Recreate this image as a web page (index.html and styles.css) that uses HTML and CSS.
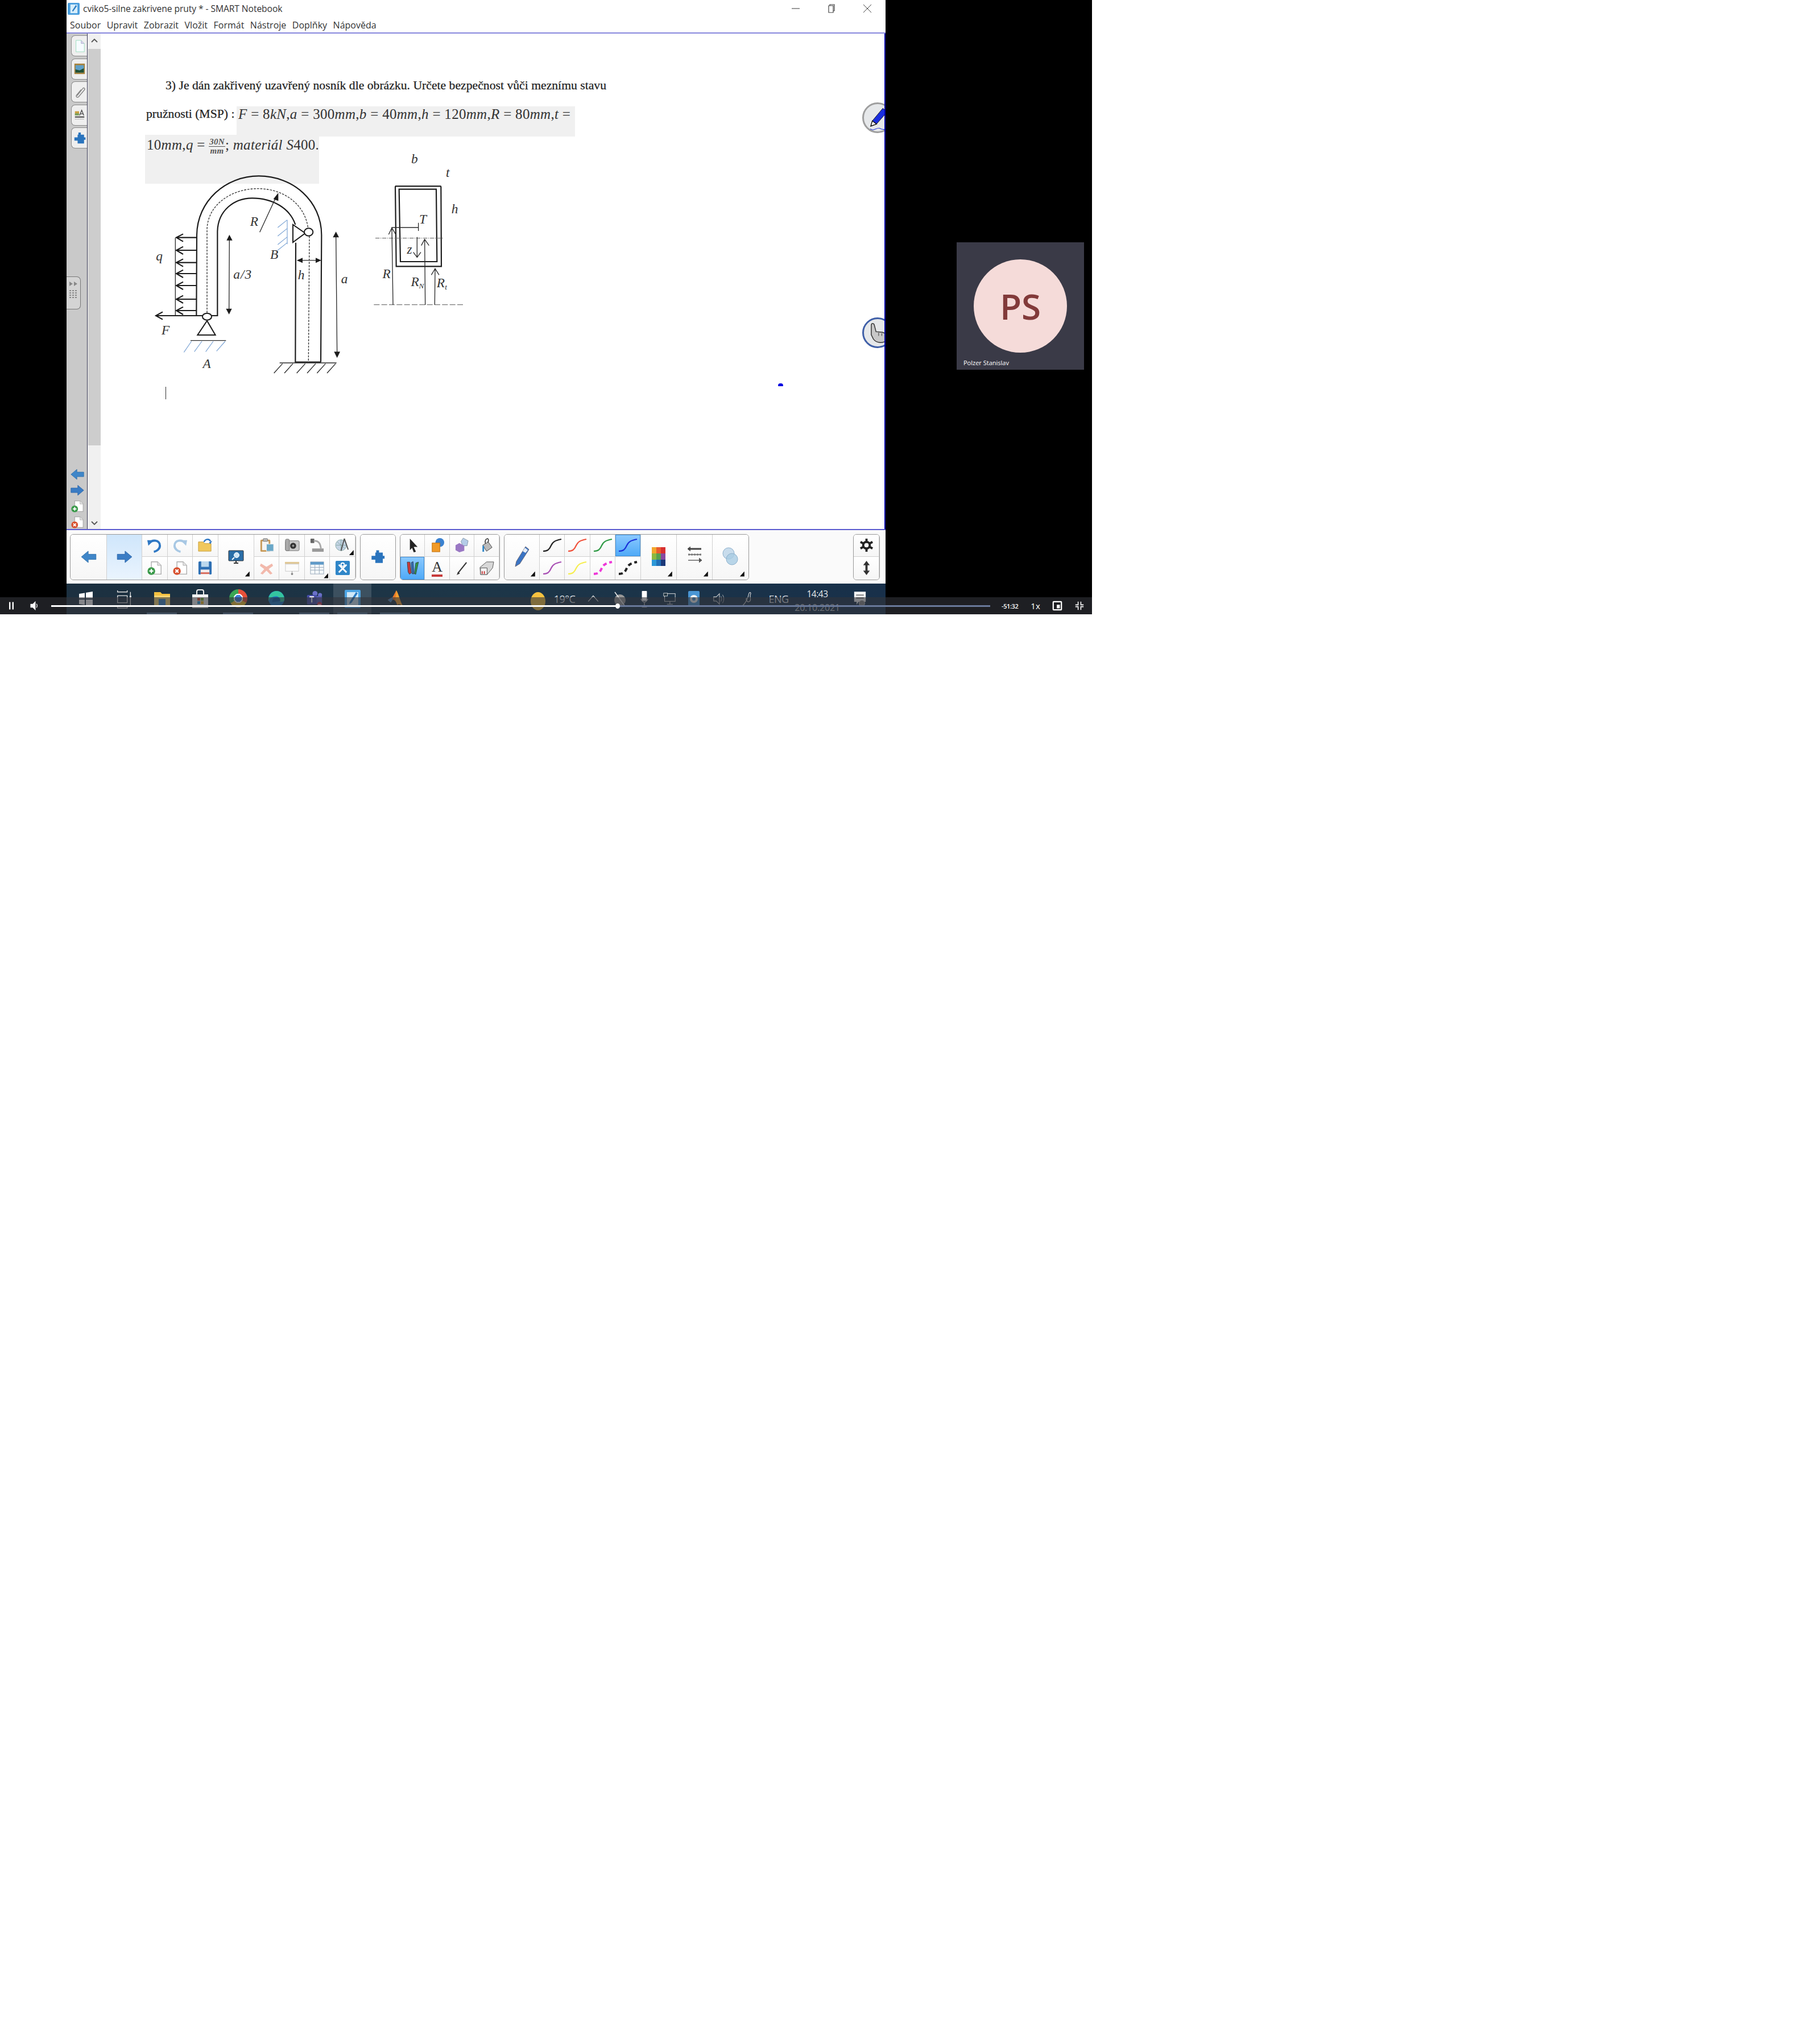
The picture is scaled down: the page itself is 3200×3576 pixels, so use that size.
FILE: index.html
```html
<!DOCTYPE html>
<html lang="cs">
<head>
    <meta charset="UTF-8">
    <title>cviko5-silne zakrivene pruty - SMART Notebook</title>
    <link rel="stylesheet" href="styles.css">
</head>
<body>
    <svg class="defs" width="0" height="0">
        <symbol id="squiggle" viewBox="0 0 36 30"><path d="M2 25C10 25 13 22 16 15C19 8 24 6 34 4" fill="none" stroke="currentColor"/></symbol>
        <symbol id="arrow-l" viewBox="0 0 30 24"><path d="M1 12L14 1V7H29V17H14V23Z" fill="#3f86c8" stroke="#2f6ea8"/></symbol>
        <symbol id="arrow-r" viewBox="0 0 30 24"><path d="M29 12L16 1V7H1V17H16V23Z" fill="#3a7cc4" stroke="#2b64a8"/></symbol>
        <symbol id="page-add" viewBox="0 0 30 28"><path d="M9 2H21L28 9V26H9Z" fill="#fff" stroke="#aaa" stroke-width="1.5"/><path d="M21 2V9H28" fill="#e4e4e4" stroke="#aaa"/><circle cx="9" cy="20" r="7.5" fill="#3a9a4a"/><path d="M5 20H13M9 16V24" stroke="#fff" stroke-width="2.5"/></symbol>
        <symbol id="page-del" viewBox="0 0 30 28"><path d="M9 2H21L28 9V26H9Z" fill="#fff" stroke="#aaa" stroke-width="1.5"/><path d="M21 2V9H28" fill="#e4e4e4" stroke="#aaa"/><circle cx="9" cy="20" r="7.5" fill="#d8502e"/><path d="M6 17L12 23M12 17L6 23" stroke="#fff" stroke-width="2.5"/></symbol>
        <symbol id="puzzle" viewBox="0 0 30 34"><path d="M12 8V3H18V8H26V15H30V21H26V30H10V23H2V15H10V8Z" fill="#2a74bd"/></symbol>
    </svg>

    <div class="video">
        <div class="window">
            <div class="titlebar">
                <svg class="app-icon" viewBox="0 0 22 22"><rect width="22" height="22" rx="2" fill="#4a9ede"/><rect x="5" y="3" width="13" height="16" fill="#d8eefa"/><path d="M8 15L15 4L17 6L10 16Z" fill="#2f7fc4"/></svg>
                <span class="title-text">cviko5-silne zakrivene pruty * - SMART Notebook</span>
                <div class="win-buttons">
                    <svg viewBox="0 0 16 16"><path d="M1 8H15" stroke="#555" stroke-width="1.2"/></svg>
                    <svg viewBox="0 0 16 16"><path d="M5 3V1H13V12H11M3 3H11V15H3Z" fill="none" stroke="#444" stroke-width="1.2"/></svg>
                    <svg viewBox="0 0 16 16"><path d="M1 1L15 15M15 1L1 15" stroke="#444" stroke-width="1"/></svg>
                </div>
            </div>
            <div class="menubar">
                <span>Soubor</span><span>Upravit</span><span>Zobrazit</span><span>Vložit</span><span>Formát</span><span>Nástroje</span><span>Doplňky</span><span>Nápověda</span>
            </div>

            <div class="main">
                <div class="sidebar">
                    <div class="side-tab"><svg viewBox="0 0 24 26"><path d="M5 2H15L21 8V24H5Z" fill="#f6fbff" stroke="#9db" stroke-width="1"/><path d="M15 2V8H21" fill="#dce" stroke="#abc"/></svg></div>
                    <div class="side-tab"><svg viewBox="0 0 24 26"><rect x="2" y="3" width="20" height="20" fill="#a8813a"/><rect x="4" y="6" width="16" height="14" fill="#5fa0c8"/><path d="M4 20V14L12 16L20 12V20Z" fill="#1f4f33"/></svg></div>
                    <div class="side-tab"><svg viewBox="0 0 24 26"><path d="M7 20L18 6C20 3 23 6 21 9L10 22C8 24 4 22 6 19L15 8" fill="none" stroke="#888" stroke-width="1.6"/></svg></div>
                    <div class="side-tab"><svg viewBox="0 0 24 26"><rect x="3" y="6" width="8" height="8" fill="#c9a040"/><rect x="3" y="10" width="8" height="4" fill="#7aa060"/><path d="M12 14L16 4L20 14M14 11H18" fill="none" stroke="#444" stroke-width="1.4"/><path d="M3 17H21" stroke="#333" stroke-width="2"/><path d="M3 21H21" stroke="#888" stroke-dasharray="2 1"/></svg></div>
                    <div class="side-tab"><svg viewBox="0 0 30 34"><use href="#puzzle"/></svg></div>
                    <div class="side-handle">
                        <svg viewBox="0 0 24 54"><path d="M5 8L11 12L5 16ZM13 8L19 12L13 16Z" fill="#888"/><path d="M5 24H19M5 28H19M5 32H19M5 36H19" stroke="#888" stroke-width="2" stroke-dasharray="3 2"/></svg>
                    </div>
                    <div class="side-nav">
                        <svg viewBox="0 0 30 24"><use href="#arrow-l"/></svg>
                        <svg viewBox="0 0 30 24"><use href="#arrow-r"/></svg>
                        <svg viewBox="0 0 30 28"><use href="#page-add"/></svg>
                        <svg viewBox="0 0 30 28"><use href="#page-del"/></svg>
                    </div>
                </div>
                <div class="scrollbar">
                    <svg class="scroll-btn" viewBox="0 0 12 8"><path d="M1 7L6 2L11 7" fill="none" stroke="#555" stroke-width="1.8"/></svg>
                    <div class="scroll-thumb"></div>
                    <svg class="scroll-btn" viewBox="0 0 12 8"><path d="M1 1L6 6L11 1" fill="none" stroke="#555" stroke-width="1.8"/></svg>
                </div>

                <div class="canvas">
                    <p class="line line-1">3) Je dán zakřivený uzavřený nosník dle obrázku. Určete bezpečnost vůči meznímu stavu</p>
                    <p class="line line-2">pružnosti (MSP) :</p>
                    <div class="math math-a"><i>F</i> = 8<i>kN</i>,<i>a</i> = 300<i>mm</i>,<i>b</i> = 40<i>mm</i>,<i>h</i> = 120<i>mm</i>,<i>R</i> = 80<i>mm</i>,<i>t</i> =</div>
                    <div class="math math-b">10<i>mm</i>,<i>q</i> = <span class="frac"><i class="num">30N</i><i class="den">mm</i></span>; <i>materiál S</i>400.</div>

                    <svg class="beam" viewBox="0 0 1200 1200">
                        <g class="thick">
                            <path d="M316 795L318 370C320 190 470 58 645 58C825 58 976 190 976 370L972 1040"/>
                            <path d="M316 795H427V350C430 240 515 175 610 175C720 175 810 230 838 315"/>
                            <path d="M840 410L838 1040H972"/>
                        </g>
                        <g class="dash">
                            <path d="M372 780V340C375 210 500 125 640 125C780 125 890 210 905 335"/>
                            <path d="M912 375L907 1040"/>
                        </g>
                        <g class="thin">
                            <path d="M205 385V795"/>
                            <path d="M755 1044H1055M725 1098L770 1048M780 1098L825 1048M845 1098L890 1048M900 1098L945 1048M952 1098L997 1048M1005 1098L1050 1048"/>
                            <path d="M285 926H472"/>
                            <path d="M650 355L738 165"/>
                            <path d="M490 385L488 770M860 503H960M1052 375L1058 995"/>
                        </g>
                        <g class="thick">
                            <path d="M316 383H210M246 364L210 383L246 404M316 450H210M246 431L210 450L246 471M316 515H210M246 496L210 515L246 536M316 573H210M246 554L210 573L246 594M316 636H210M246 617L210 636L246 657M316 708H210M246 689L210 708L246 729M316 768H210M246 749L210 768L246 789"/>
                            <path d="M320 795H102M138 775L102 795L138 815"/>
                        </g>
                        <g class="hatch">
                            <path d="M795 290V418M745 330L795 290M745 375L795 335M745 420L795 380M745 450L795 410"/>
                            <path d="M250 988L290 930M305 985L345 930M365 985L405 930M422 982L468 930"/>
                        </g>
                        <path class="solid" d="M748 147L722 180L748 190ZM490 368L475 398H506ZM488 788L472 758H503ZM845 503L876 490V517ZM975 503L945 490V517ZM1052 352L1036 382H1068ZM1058 1018L1042 985H1074Z"/>
                        <path class="shape" d="M825 315V408L890 360Z"/>
                        <ellipse class="shape" cx="908" cy="354" rx="23" ry="20"/>
                        <path class="shape" d="M372 822L322 897H416Z"/>
                        <ellipse class="shape" cx="372" cy="800" rx="24" ry="18"/>
                        <text class="lbl" x="622" y="320" text-anchor="middle">R</text>
                        <text class="lbl" x="728" y="495" text-anchor="middle">B</text>
                        <text class="lbl" x="122" y="504" text-anchor="middle">q</text>
                        <text class="lbl" x="560" y="600" text-anchor="middle">a/3</text>
                        <text class="lbl" x="870" y="604" text-anchor="middle">h</text>
                        <text class="lbl" x="1098" y="624" text-anchor="middle">a</text>
                        <text class="lbl" x="155" y="895" text-anchor="middle">F</text>
                        <text class="lbl" x="372" y="1071" text-anchor="middle">A</text>
                    </svg>

                    <svg class="section" viewBox="0 0 720 960">
                        <g class="thick">
                            <path d="M225 232H463Q466 232 466 236L468 655H230L225 236Q225 232 229 232Z"/>
                            <path d="M245 248H441L445 630H252Z"/>
                        </g>
                        <path class="gray" d="M120 506H480" stroke-dasharray="22 5 4 5"/>
                        <path class="gray" d="M112 857H590" stroke-dasharray="30 10"/>
                        <g class="thin">
                            <path d="M205 450H345M347 425V468"/>
                            <path d="M213 858L207 455M190 487L207 452L228 487"/>
                            <path d="M340 500V605M320 580L340 607L360 580"/>
                            <path d="M383 858L380 512M362 545L380 512L403 545"/>
                            <path d="M433 858L435 667M415 700L435 667L456 700"/>
                        </g>
                        <text class="lbl" x="328" y="112" text-anchor="middle">b</text>
                        <text class="lbl" x="503" y="182" text-anchor="middle">t</text>
                        <text class="lbl" x="540" y="376" text-anchor="middle">h</text>
                        <text class="lbl" x="372" y="430" text-anchor="middle">T</text>
                        <text class="lbl" x="302" y="588" text-anchor="middle">z</text>
                        <text class="lbl" x="180" y="717" text-anchor="middle">R</text>
                        <text class="lbl" x="330" y="760" text-anchor="middle">R</text>
                        <text class="lbl-sub" x="363" y="772" text-anchor="middle">N</text>
                        <text class="lbl" x="466" y="764" text-anchor="middle">R</text>
                        <text class="lbl-sub" x="492" y="778" text-anchor="middle">t</text>
                    </svg>

                    <div class="caret"></div>
                    <div class="ink-dot"></div>

                    <div class="float-btn float-pen">
                        <svg viewBox="0 0 52 52"><path d="M16 32L36 8L44 15L24 38L13 42Z" fill="#1a2ee0" stroke="#111"/><path d="M16 32L24 38L13 42Z" fill="#fff" stroke="#111" stroke-width="1.5"/><path d="M12 47C18 53 24 44 30 46C34 48 38 50 46 46" fill="none" stroke="#2438d8" stroke-width="1.2"/></svg>
                    </div>
                    <div class="float-btn float-hand">
                        <svg viewBox="0 0 52 52"><path d="M14 12C14 7 19 7 20 12L23 24L34 25C42 26 44 32 42 42C34 46 24 46 18 38L14 30Z" fill="#c8c8c8" stroke="#333" stroke-width="1.6"/><path d="M28 26V32M34 27V32" stroke="#333"/></svg>
                    </div>
                </div>
            </div>

            <div class="toolbar">
                <div class="tb-group">
                    <div class="cell big w64"><svg class="ic-l" viewBox="0 0 30 24"><use href="#arrow-l"/></svg></div>
                    <div class="cell big w62 selected"><svg class="ic-l" viewBox="0 0 30 24"><use href="#arrow-r"/></svg></div>
                    <div class="stack cols-3">
                        <div class="cell"><svg viewBox="0 0 28 28"><path d="M4 11C10 3 24 4 24 15C24 21 18 25 13 26" fill="none" stroke="#2f78c4" stroke-width="4"/><path d="M1 5L12 5L3 15Z" fill="#2f78c4"/></svg></div>
                        <div class="cell"><svg viewBox="0 0 28 28"><path d="M24 11C18 3 4 4 4 15C4 21 10 25 15 26" fill="none" stroke="#a8c8e4" stroke-width="4"/><path d="M27 5L16 5L25 15Z" fill="#a8c8e4"/></svg></div>
                        <div class="cell"><svg viewBox="0 0 28 28"><path d="M2 8H11L13 11H25V25H2Z" fill="#f0c75c" stroke="#c8a040"/><path d="M12 8C15 2 22 2 24 7" fill="none" stroke="#2f78c4" stroke-width="2.5"/><path d="M21 9L27 6L24 12Z" fill="#2f78c4"/></svg></div>
                        <div class="cell"><svg viewBox="0 0 30 28"><use href="#page-add"/></svg></div>
                        <div class="cell"><svg viewBox="0 0 30 28"><use href="#page-del"/></svg></div>
                        <div class="cell"><svg viewBox="0 0 28 28"><rect x="2" y="2" width="24" height="24" rx="2" fill="#2e70b4"/><rect x="7" y="2" width="14" height="10" fill="#bcd8ee"/><rect x="6" y="17" width="16" height="9" fill="#f4ecec"/><rect x="6" y="22" width="16" height="3" fill="#d86a5a"/></svg></div>
                    </div>
                    <div class="cell big w63 more"><svg class="ic-m" viewBox="0 0 28 26"><rect x="1" y="2" width="26" height="18" rx="1" fill="#2a6ea8" stroke="#333"/><circle cx="15" cy="10" r="4.5" fill="#cfe6f6" stroke="#fff"/><path d="M11 14L7 18" stroke="#fff" stroke-width="2"/><path d="M10 24H18M14 20V24" stroke="#333" stroke-width="2"/></svg></div>
                    <div class="stack cols-4">
                        <div class="cell"><svg viewBox="0 0 28 28"><rect x="3" y="4" width="18" height="22" rx="2" fill="#c89a5a"/><rect x="6" y="7" width="12" height="16" fill="#f4f4f4"/><rect x="8" y="2" width="8" height="5" rx="1" fill="#bbb" stroke="#777"/><rect x="14" y="12" width="13" height="13" fill="#6aa8c8" stroke="#eee"/></svg></div>
                        <div class="cell"><svg viewBox="0 0 28 28"><rect x="2" y="6" width="25" height="18" rx="2" fill="#c8c8c8" stroke="#777"/><rect x="2" y="3" width="7" height="21" rx="2" fill="#aaa" stroke="#777"/><circle cx="16" cy="15" r="5.5" fill="#333"/><circle cx="16" cy="15" r="2" fill="#999"/></svg></div>
                        <div class="cell"><svg viewBox="0 0 28 28"><rect x="2" y="2" width="7" height="8" rx="1" fill="#666"/><path d="M8 6C18 6 20 12 21 20" fill="none" stroke="#aaa" stroke-width="3"/><rect x="5" y="20" width="21" height="6" fill="#999"/></svg></div>
                        <div class="cell more-sm"><svg viewBox="0 0 28 28"><circle cx="11" cy="14" r="10" fill="#c4d4e4" stroke="#8aa"/><path d="M11 4V24M2 14H20M4 8L18 20" stroke="#8aa"/><path d="M17 2L11 24M17 2L24 22" stroke="#555" stroke-width="2"/></svg></div>
                        <div class="cell"><svg viewBox="0 0 28 28"><path d="M4 6L14 12L24 6L26 10L18 16L25 24L21 26L14 19L7 26L3 24L10 16L2 10Z" fill="#f2b9ac"/></svg></div>
                        <div class="cell"><svg viewBox="0 0 28 28"><rect x="1" y="3" width="26" height="4" fill="#e0c896"/><rect x="2" y="7" width="24" height="13" fill="#fbfbfb" stroke="#ccc"/><path d="M14 20V26" stroke="#999"/><circle cx="14" cy="25" r="2" fill="#888"/></svg></div>
                        <div class="cell more-sm"><svg viewBox="0 0 28 28"><rect x="2" y="3" width="24" height="22" fill="#f4f8fa" stroke="#9ab"/><rect x="2" y="3" width="24" height="5" fill="#5f9ac8"/><path d="M2 13H26M2 18H26M10 8V25M18 8V25" stroke="#9ab"/></svg></div>
                        <div class="cell"><svg viewBox="0 0 28 28"><rect x="1" y="1" width="26" height="26" rx="2" fill="#2f86c8"/><circle cx="14" cy="8" r="3" fill="none" stroke="#fff" stroke-width="2"/><path d="M7 22L21 8M21 22L7 8" stroke="#fff" stroke-width="3"/></svg></div>
                    </div>
                </div>

                <div class="tb-group">
                    <div class="cell big w61"><svg class="ic-m" viewBox="0 0 30 34"><use href="#puzzle"/></svg></div>
                </div>

                <div class="tb-group tb-tools">
                    <div class="stack cols-4">
                        <div class="cell"><svg viewBox="0 0 28 28"><path d="M9 2L23 17H16L20 26L16 27L13 19L9 23Z" fill="#222"/></svg></div>
                        <div class="cell"><svg viewBox="0 0 28 28"><circle cx="19" cy="9" r="8" fill="#3b82d0"/><rect x="5" y="10" width="14" height="16" fill="#f09a28" stroke="#c07010"/></svg></div>
                        <div class="cell"><svg viewBox="0 0 28 28"><path d="M16 1L25 6L23 15L15 15L12 7Z" fill="#b4cce8" stroke="#89a"/><path d="M9 10L18 15V24L9 27L2 23V14Z" fill="#9a78c4"/></svg></div>
                        <div class="cell"><svg viewBox="0 0 28 28"><path d="M7 14L17 8L24 18L14 25Z" fill="#bbb" stroke="#444"/><path d="M12 11C10 6 13 2 16 2C19 4 17 8 16 9" fill="none" stroke="#333" stroke-width="1.6"/><path d="M8 15V26" stroke="#2f86c8" stroke-width="3"/></svg></div>
                        <div class="cell picked"><svg viewBox="0 0 34 34"><path d="M5 4L11 4L14 28L10 31L7 26Z" fill="#c83a3a" stroke="#333"/><path d="M14 5L18 3L20 30H16Z" fill="#2f6ec4" stroke="#333"/><path d="M30 4L24 6L21 30L24 31Z" fill="#2f9a4a" stroke="#333"/></svg></div>
                        <div class="cell text-tool"><span>A</span></div>
                        <div class="cell"><svg viewBox="0 0 28 28"><path d="M22 4L6 24" stroke="#333" stroke-width="2.2"/><path d="M7 21L4 27L10 24Z" fill="#333"/></svg></div>
                        <div class="cell"><svg viewBox="0 0 28 28"><path d="M2 13L14 3H27L25 14L15 26H3Z" fill="#d8d8d8" stroke="#555"/><path d="M3 14H15V26H3Z" fill="#f4f4f4" stroke="#555"/><path d="M6 20V25M10 20V25" stroke="#c83a3a" stroke-width="2"/></svg></div>
                    </div>
                </div>

                <div class="tb-group">
                    <div class="cell big w62 more"><svg class="ic-xl" viewBox="0 0 30 40"><path d="M22 2L28 7L12 32L4 37L6 28Z" fill="#3a74c4" stroke="#667"/><path d="M21 4L26 8L22 13L17 10Z" fill="#e8eef6"/></svg></div>
                    <div class="stack cols-4">
                        <div class="cell pen black"><svg viewBox="0 0 36 30"><use href="#squiggle"/></svg></div>
                        <div class="cell pen red"><svg viewBox="0 0 36 30"><use href="#squiggle"/></svg></div>
                        <div class="cell pen green"><svg viewBox="0 0 36 30"><use href="#squiggle"/></svg></div>
                        <div class="cell pen blue picked"><svg viewBox="0 0 36 30"><use href="#squiggle"/></svg></div>
                        <div class="cell pen purple"><svg viewBox="0 0 36 30"><use href="#squiggle"/></svg></div>
                        <div class="cell pen yellow"><svg viewBox="0 0 36 30"><use href="#squiggle"/></svg></div>
                        <div class="cell pen magenta dashed"><svg viewBox="0 0 36 30"><use href="#squiggle"/></svg></div>
                        <div class="cell pen black dashed"><svg viewBox="0 0 36 30"><use href="#squiggle"/></svg></div>
                    </div>
                    <div class="cell big w63 more"><svg class="ic-xl" viewBox="0 0 30 40"><rect x="3" y="3" width="8" height="11" fill="#f2a62c"/><rect x="11" y="3" width="8" height="11" fill="#e85c30"/><rect x="19" y="3" width="8" height="11" fill="#d83030"/><rect x="3" y="14" width="8" height="11" fill="#8cb840"/><rect x="11" y="14" width="8" height="11" fill="#58a050"/><rect x="19" y="14" width="8" height="11" fill="#8848a0"/><rect x="3" y="25" width="8" height="11" fill="#2c98d8"/><rect x="11" y="25" width="8" height="11" fill="#2070b8"/><rect x="19" y="25" width="8" height="11" fill="#1c3878"/></svg></div>
                    <div class="cell big w63 more"><svg class="ic-xl" viewBox="0 0 30 40"><path d="M4 6H27M4 16H27M4 26H27" stroke="#888" stroke-width="2"/><path d="M8 2L3 6L8 10M23 22L28 26L23 30" fill="#555" stroke="#555"/><path d="M4 6H27" stroke="#444" stroke-width="3"/><path d="M4 16H27" stroke="#777" stroke-width="3" stroke-dasharray="3 2"/></svg></div>
                    <div class="cell big w63 more"><svg class="ic-xl" viewBox="0 0 30 40"><circle cx="12" cy="14" r="10" fill="#c8dcec" stroke="#8cb0cc"/><circle cx="18" cy="24" r="10" fill="#a8cce4" fill-opacity=".8" stroke="#8cb0cc"/></svg></div>
                </div>

                <div class="tb-group tb-right">
                    <div class="stack cols-1">
                        <div class="cell"><svg viewBox="0 0 28 28"><path d="M14 2V26M3 8L25 20M25 8L3 20" stroke="#222" stroke-width="4"/><circle cx="14" cy="14" r="8" fill="#222"/><circle cx="14" cy="14" r="4" fill="#f8f8f8"/></svg></div>
                        <div class="cell"><svg viewBox="0 0 28 28"><path d="M14 1L20 9H16V19H20L14 27L8 19H12V9H8Z" fill="#333"/></svg></div>
                    </div>
                </div>
            </div>

            <div class="taskbar">
                <div class="task-icons">
                    <div class="task"><svg viewBox="0 0 30 30"><path d="M3 6L13 4.500V14H3ZM15 4L27 2V14H15ZM3 16H13V25.500L3 24ZM15 16H27V28L15 26Z" fill="#fff"/></svg></div>
                    <div class="task"><svg viewBox="0 0 30 36"><path d="M3 2V5H21V2M3 12H21V25H3ZM3 32V35H21V32M27 5V12M27 15V30" fill="none" stroke="#ddd" stroke-width="1.500"/><rect x="25.500" y="12" width="3" height="3" fill="#fff"/></svg></div>
                    <div class="task running"><svg viewBox="0 0 30 30"><path d="M1 3H12L15 6H29V27H1Z" fill="#f4c040"/><rect x="1" y="9" width="28" height="18" fill="#f8d674"/><rect x="9" y="15" width="12" height="12" fill="#3a86c8"/></svg></div>
                    <div class="task"><svg viewBox="0 0 30 34"><path d="M9 10V4Q9 1 12 1H18Q21 1 21 4V10" fill="none" stroke="#eee" stroke-width="2"/><rect x="1" y="9" width="28" height="24" fill="#f4f4f4"/><rect x="10" y="15" width="5" height="5" fill="#e0522a"/><rect x="16" y="15" width="5" height="5" fill="#7ab834"/><rect x="10" y="21" width="5" height="5" fill="#2a9ad8"/><rect x="16" y="21" width="5" height="5" fill="#f2b820"/></svg></div>
                    <div class="task running"><div class="chrome"></div></div>
                    <div class="task"><svg viewBox="0 0 32 32"><circle cx="16" cy="16" r="15" fill="#1a76c4"/><path d="M1 16C2 6 10 1 16 1C24 1 31 7 31 17C31 21 27 22 22 21C24 18 23 12 16 11C9 11 4 14 1 20Z" fill="#34c4a0"/><path d="M8 22C8 16 12 13 17 13C21 13 24 16 23 20" fill="#0a5aa8"/></svg></div>
                    <div class="task running"><svg viewBox="0 0 34 34"><circle cx="18" cy="6" r="5" fill="#6a70c8"/><circle cx="28" cy="9" r="4" fill="#6a70c8"/><rect x="14" y="11" width="18" height="16" rx="3" fill="#5a60b8"/><rect x="2" y="9" width="19" height="19" rx="2" fill="#464ea8"/><path d="M7 13H16M11.500 13V24" stroke="#fff" stroke-width="2.500"/><circle cx="27" cy="28" r="5" fill="#c8304a"/><path d="M24 28H30" stroke="#fff" stroke-width="1.500"/></svg></div>
                    <div class="task running current"><svg viewBox="0 0 30 34"><rect x="1" y="1" width="28" height="32" rx="2" fill="#4ca4e4"/><rect x="5" y="5" width="20" height="24" fill="#cfe8f8"/><path d="M10 22L21 5L24 7L13 24L9 26Z" fill="#2a7cc4"/></svg></div>
                    <div class="task running matlab"><svg viewBox="0 0 34 36"><path d="M2 20L12 14L19 1C23 6 27 24 32 32C27 29 24 27 21 30C19 24 17 20 12 19L8 25Z" fill="#e8782a"/><path d="M2 20L12 14L12 19L8 25Z" fill="#4a8ac8"/><path d="M19 1L17 20L21 30C24 27 27 29 32 32C27 24 23 6 19 1Z" fill="#f4a030"/></svg></div>
                </div>
                <div class="tray">
                    <div class="tray-item"><div class="sun"></div></div>
                    <div class="tray-item tray-text">19°C</div>
                    <div class="tray-item"><svg viewBox="0 0 20 20"><path d="M2 14L10 5L18 14" fill="none" stroke="#ddd" stroke-width="1.200"/></svg></div>
                    <div class="tray-item"><svg viewBox="0 0 22 28"><ellipse cx="11" cy="16" rx="10" ry="10" fill="#999"/><path d="M2 2L20 27" stroke="#eee" stroke-width="1.500"/></svg></div>
                    <div class="tray-item"><svg viewBox="0 0 16 34"><rect x="3" y="1" width="10" height="20" rx="1" fill="#fff"/><path d="M1 17Q8 30 15 17M8 25V32M3 33H13" fill="none" stroke="#ccc" stroke-width="1.500"/></svg></div>
                    <div class="tray-item"><svg viewBox="0 0 26 26"><rect x="3" y="2" width="22" height="16" fill="none" stroke="#ddd" stroke-width="1.200"/><rect x="1" y="1" width="8" height="6" fill="#1f3340" stroke="#ddd"/><path d="M14 18V24M8 24H20" stroke="#ddd" stroke-width="1.200"/></svg></div>
                    <div class="tray-item"><svg viewBox="0 0 22 30"><rect x="1" y="1" width="20" height="28" rx="2" fill="#4a96d4"/><circle cx="11" cy="15" r="7" fill="#f4f4f4"/><circle cx="11" cy="15" r="3" fill="#4a96d4"/></svg></div>
                    <div class="tray-item"><svg viewBox="0 0 24 28"><path d="M2 10H7L13 4V24L7 18H2Z" fill="none" stroke="#ccc" stroke-width="1.200"/><path d="M16 9Q19 14 16 19M19 6Q24 14 19 22" fill="none" stroke="#bbb"/></svg></div>
                    <div class="tray-item"><svg viewBox="0 0 24 30"><path d="M4 28C8 24 14 16 16 5C17 1 21 2 19 7C17 13 22 16 17 20C13 22 9 16 12 13" fill="none" stroke="#ccc" stroke-width="1.300"/></svg></div>
                    <div class="tray-item tray-text">ENG</div>
                    <div class="tray-item clock"><span class="clock-time">14:43</span><span class="clock-date">20.10.2021</span></div>
                    <div class="tray-item"><svg viewBox="0 0 26 32"><path d="M1 1H25V22H10L6 28V22H1Z" fill="#f4f4f4"/><path d="M5 8H21M5 14H21" stroke="#666" stroke-width="2"/><circle cx="17" cy="25" r="6" fill="#888" stroke="#ddd"/></svg></div>
                </div>
            </div>
        </div>

        <div class="speaker">
            <div class="avatar">PS</div>
            <span class="speaker-name">Polzer Stanislav</span>
        </div>

        <div class="player">
            <svg class="pl-icon" viewBox="0 0 14 20"><path d="M2 2H5V18H2ZM9 2H12V18H9Z" fill="#fff"/></svg>
            <svg class="pl-icon pl-sound" viewBox="0 0 18 22"><path d="M1 7H6L12 1V21L6 15H1Z" fill="#fff"/><path d="M14 7Q17 11 14 15" fill="none" stroke="#fff" stroke-width="1.500"/></svg>
            <div class="progress"><div class="played" style="width: 60.3%"></div></div>
            <span class="pl-time">-51:32</span>
            <span class="pl-speed">1x</span>
            <svg class="pl-icon pl-pip" viewBox="0 0 20 20"><rect x="2" y="2" width="16" height="16" rx="1" fill="none" stroke="#fff" stroke-width="2.500"/><rect x="9" y="8" width="6" height="7" fill="#fff"/></svg>
            <svg class="pl-icon pl-full" viewBox="0 0 20 20"><path d="M7 1V8H1M13 1V8H19M7 19V12H1M13 19V12H19" fill="none" stroke="#fff" stroke-width="2"/></svg>
        </div>
    </div>
</body>
</html>
```

FILE: styles.css
```css
* {
    margin: 0;
    padding: 0;
    box-sizing: border-box;
}

body {
    background: white;
    font-family: "Open Sans", sans-serif;
}

.defs {
    position: absolute;
}

svg {
    display: block;
}

.video {
    position: relative;
    width: 1920px;
    height: 1080px;
    background: black;
    overflow: hidden;
    padding-left: 117px;
}

.window {
    width: 1440px;
    height: 1080px;
    display: flex;
    flex-direction: column;
    background: white;
}

/* title + menu */
.titlebar {
    height: 30px;
    display: flex;
    align-items: center;
    padding-left: 2px;
    color: #333;
}

.app-icon {
    width: 21px;
    height: 21px;
}

.title-text {
    margin-left: 6px;
    font-size: 15.7px;
    letter-spacing: -0.1px;
}

.win-buttons {
    margin-left: auto;
    display: flex;
    gap: 47px;
    padding-right: 24px;
}

.win-buttons svg {
    width: 16px;
    height: 16px;
}

.menubar {
    height: 29px;
    display: flex;
    gap: 10.5px;
    padding-left: 6px;
    align-items: center;
    font-size: 16px;
    color: #333;
    border-bottom: 2px solid #8686dc;
}

/* middle */
.main {
    height: 873px;
    display: flex;
    border-bottom: 2px solid #5a5ad0;
}

.sidebar {
    width: 37px;
    background: #c9c9c9;
    border-right: 1px solid #3a3a55;
    display: flex;
    flex-direction: column;
    padding-top: 3px;
}

.side-tab {
    width: 28px;
    height: 37px;
    margin-left: 8px;
    margin-bottom: 3.500px;
    background: #efefef;
    border: 1px solid #8c8c8c;
    border-right: none;
    border-radius: 7px 0 0 7px;
    display: flex;
    align-items: center;
    justify-content: center;
}

.side-tab svg {
    width: 22px;
    height: 24px;
}

.side-handle {
    width: 25px;
    height: 58px;
    margin-top: 221px;
    background: #d4d4d4;
    border: 1px solid #777;
    border-left: none;
    border-radius: 0 7px 7px 0;
}

.side-handle svg {
    width: 24px;
    height: 54px;
}

.side-nav {
    margin-top: auto;
    display: flex;
    flex-direction: column;
    gap: 6px;
    padding: 0 0 1px 7px;
}

.side-nav svg {
    width: 24px;
    height: 22px;
}

.scrollbar {
    width: 23px;
    background: #f0f0f0;
    display: flex;
    flex-direction: column;
    align-items: center;
    justify-content: space-between;
    padding-top: 8px;
    padding-bottom: 6px;
}

.scroll-btn {
    width: 12px;
    height: 8px;
}

.scroll-thumb {
    width: 22px;
    height: 697px;
    background: #cdcdcd;
    margin-bottom: 130px;
    margin-top: 7px;
}

/* the notebook page is a free canvas */
.canvas {
    position: relative;
    flex: 1;
    border-right: 2px solid #0000a8;
    overflow: hidden;
    background: #fff;
    color: #222;
}

.line {
    position: absolute;
    font-family: "Liberation Serif", serif;
    font-size: 21.7px;
    white-space: nowrap;
    -webkit-text-stroke: 0.25px #222;
}

.line-1 {
    left: 114px;
    top: 79px;
}

.line-2 {
    left: 80px;
    top: 129px;
}

.math {
    position: absolute;
    background: #f0f0f0;
    font-family: "Liberation Serif", serif;
    font-size: 25px;
    letter-spacing: 0.3px;
    white-space: nowrap;
    color: #333;
}

.math-a {
    left: 239px;
    top: 128px;
    width: 595px;
    height: 53px;
    padding: 0 3px;
    line-height: 27px;
}

.math-b {
    left: 78px;
    top: 178px;
    width: 306px;
    height: 86px;
    padding: 0 3px;
    line-height: 36px;
}

.frac {
    display: inline-flex;
    flex-direction: column;
    align-items: center;
    vertical-align: middle;
    font-size: 15px;
    line-height: 15px;
    font-weight: bold;
    color: #555;
}

.frac .num {
    border-bottom: 1.500px solid #555;
    padding: 0 1px;
}

.beam {
    position: absolute;
    left: 63px;
    top: 231px;
    width: 400px;
    height: 400px;
}

.section {
    position: absolute;
    left: 443px;
    top: 191px;
    width: 240px;
    height: 320px;
}

.thick, .thin, .dash, .hatch, .gray {
    fill: none;
}

.thick {
    stroke: #1c1c1c;
    stroke-width: 6.500px;
}

.thin {
    stroke: #2a2a2a;
    stroke-width: 4px;
}

.dash {
    stroke: #333;
    stroke-width: 4px;
    stroke-dasharray: 11 6;
}

.hatch {
    stroke: #7ba3d4;
    stroke-width: 3.500px;
}

.gray {
    stroke: #777;
    stroke-width: 3.500px;
}

.solid {
    fill: #1c1c1c;
}

.shape {
    fill: #fff;
    stroke: #1c1c1c;
    stroke-width: 6px;
}

.lbl {
    font-family: "Liberation Serif", serif;
    font-style: italic;
    font-size: 70px;
    letter-spacing: 3px;
    fill: #333;
}

.lbl-sub {
    font-family: "Liberation Serif", serif;
    font-style: italic;
    font-size: 40px;
    fill: #333;
}

.caret {
    position: absolute;
    left: 114px;
    top: 621px;
    width: 1px;
    height: 22px;
    background: #333;
}

.ink-dot {
    position: absolute;
    left: 1191px;
    top: 615px;
    width: 9px;
    height: 5px;
    background: #0000e0;
    border-radius: 4px 4px 1px 1px;
}

.float-btn {
    position: absolute;
    left: 1339px;
    width: 54px;
    height: 54px;
    background: #e6e8ea;
    border-radius: 50%;
    border: 3px solid #9e9e9e;
}

.float-btn svg {
    width: 48px;
    height: 48px;
}

.float-pen {
    top: 121px;
}

.float-hand {
    top: 499px;
    border-color: #3f5fa8;
}

/* toolbar */
.toolbar {
    height: 94px;
    background: #fafafa;
    display: flex;
    align-items: center;
    padding: 0 10px 0 6px;
    gap: 7px;
}

.tb-group {
    display: flex;
    height: 81px;
    border: 1.500px solid #999;
    border-radius: 6px;
    overflow: hidden;
    background: linear-gradient(#fff, #f3f3f3);
}

.tb-right {
    margin-left: auto;
}

.cell {
    display: flex;
    align-items: center;
    justify-content: center;
    position: relative;
    border-right: 1px solid #d0d0d0;
    border-bottom: 1px solid #d0d0d0;
    background: linear-gradient(#fff, #f6f6f6);
}

.cell svg {
    width: 27px;
    height: 27px;
}

.big {
    border-bottom: none;
    height: 100%;
}

.w61 { width: 61px; }
.w62 { width: 62px; }
.w63 { width: 63px; }
.w64 { width: 64px; }

.tb-group > .cell:last-child {
    border-right: none;
}

.selected {
    background: linear-gradient(#cfe6fb, #eaf4fe);
}

.picked {
    background: linear-gradient(#8ccaff, #4ea9f7);
    box-shadow: inset 0 0 0 1px #3f8fd8;
}

.ic-l {
    width: 28px !important;
    height: 22px !important;
}

.ic-m {
    width: 28px !important;
    height: 28px !important;
}

.ic-xl {
    width: 30px !important;
    height: 40px !important;
}

.text-tool span {
    font-family: "Liberation Serif", serif;
    font-size: 26px;
    line-height: 26px;
    color: #333;
    border-bottom: 4px solid #c83a3a;
}

.stack {
    display: grid;
    grid-template-rows: 1fr 1fr;
    height: 100%;
}

.stack .cell:nth-last-child(-n+4) {
    border-bottom: none;
}

.cols-1 { grid-template-columns: 45px; }
.cols-3 { grid-template-columns: repeat(3, 44.600px); }
.cols-4 { grid-template-columns: repeat(4, 44.500px); }
.tb-tools .cols-4 { grid-template-columns: repeat(4, 43.500px); }

.cols-3 .cell:nth-child(-n+3),
.cols-1 .cell:first-child {
    border-bottom: 1px solid #d0d0d0;
}

.more::after, .more-sm::after {
    content: "";
    position: absolute;
    right: 7px;
    bottom: 5px;
    width: 8px;
    height: 9px;
    background: #111;
    clip-path: polygon(100% 0, 100% 100%, 0 100%);
}

.more-sm::after {
    right: 2px;
    bottom: 2px;
}

.pen {
    stroke-width: 2.200px;
}

.pen svg {
    width: 36px;
    height: 30px;
}

.black { color: #222; }
.red { color: #f0503a; }
.green { color: #2f9a45; }
.blue { color: #1a30d8; }
.purple { color: #a84fb4; }
.yellow { color: #f6ee50; }
.magenta { color: #ee38d8; }

.dashed {
    stroke-width: 4px;
    stroke-dasharray: 7 5;
}

/* windows taskbar inside the video */
.taskbar {
    height: 54px;
    background: linear-gradient(90deg, #1c3040, #1d3648 50%, #18304a);
    display: flex;
    justify-content: space-between;
    padding-right: 7px;
    color: #e8e8e8;
}

.task-icons {
    display: flex;
}

.task {
    width: 67px;
    display: flex;
    justify-content: center;
    padding-top: 10px;
    position: relative;
}

.task svg {
    width: 30px;
    height: 34px;
}

.task.running::after {
    content: "";
    position: absolute;
    left: 7px;
    right: 7px;
    bottom: 0;
    height: 3px;
    background: #5d7f9e;
}

.task.current {
    background: rgba(255, 255, 255, 0.14);
}

.matlab {
    margin-left: 8px;
}

.chrome {
    width: 32px;
    height: 32px;
    border-radius: 50%;
    background: radial-gradient(#3f7fdc 0 27%, #fff 28% 36%, transparent 37%), conic-gradient(#e8503a 0 33%, #f6c22c 33% 66%, #3aa655 66% 100%);
}

.tray {
    display: grid;
    grid-template-columns: 42px 51px 50px 43px 44px 43px 43px 46px 51px 62px 74px 76px;
    align-items: start;
}

.tray-item {
    height: 54px;
    display: flex;
    justify-content: center;
    padding-top: 12px;
    font-size: 18px;
}

.tray-item svg {
    width: 22px;
    height: 30px;
}

.tray-text {
    padding-top: 15px;
    color: #d8dce0;
    letter-spacing: -0.5px;
}

.sun {
    width: 26px;
    height: 32px;
    border-radius: 50%;
    margin-top: 3px;
    background: #f6c240;
}

.clock {
    flex-direction: column;
    align-items: center;
    padding-top: 5px;
    gap: 4px;
    white-space: nowrap;
}

.clock-time {
    font-size: 15.500px;
    line-height: 20px;
    letter-spacing: -0.5px;
}

.clock-date {
    font-size: 16px;
    line-height: 20px;
    color: #c4c8cc;
    letter-spacing: -0.2px;
}

/* speaker tile */
.speaker {
    position: absolute;
    left: 1682px;
    top: 426px;
    width: 224px;
    height: 224px;
    background: #3a3a47;
    display: flex;
    flex-direction: column;
    align-items: center;
    padding-top: 30px;
}

.avatar {
    width: 164px;
    height: 164px;
    border-radius: 50%;
    background: #f5dbd9;
    color: #823a3a;
    font-size: 62px;
    font-weight: 600;
    display: flex;
    align-items: center;
    justify-content: center;
}

.speaker-name {
    align-self: flex-start;
    margin: 10px 0 0 12px;
    font-size: 11px;
    color: white;
}

/* video player controls, over everything else */
.player {
    position: absolute;
    left: 0;
    right: 0;
    bottom: 0;
    height: 30px;
    background: rgba(50, 52, 58, 0.6);
    display: flex;
    align-items: center;
    padding-left: 14px;
    color: white;
}

.pl-icon {
    width: 12px;
    height: 16px;
}

.pl-sound {
    width: 16px;
    height: 18px;
    margin-left: 26px;
}

.progress {
    width: 1651px;
    height: 3px;
    margin-left: 22px;
    background: #69799a;
}

.played {
    height: 100%;
    background: white;
    position: relative;
}

.played::after {
    content: "";
    position: absolute;
    right: -4px;
    top: -3px;
    width: 8px;
    height: 9px;
    border-radius: 50%;
    background: white;
}

.pl-time {
    margin-left: 20px;
    font-size: 11px;
    font-weight: 600;
    letter-spacing: -0.4px;
}

.pl-speed {
    margin-left: 22px;
    font-size: 15px;
}

.pl-pip {
    width: 18px;
    height: 18px;
    margin-left: 21px;
}

.pl-full {
    width: 16px;
    height: 18px;
    margin-left: 22px;
}
```
